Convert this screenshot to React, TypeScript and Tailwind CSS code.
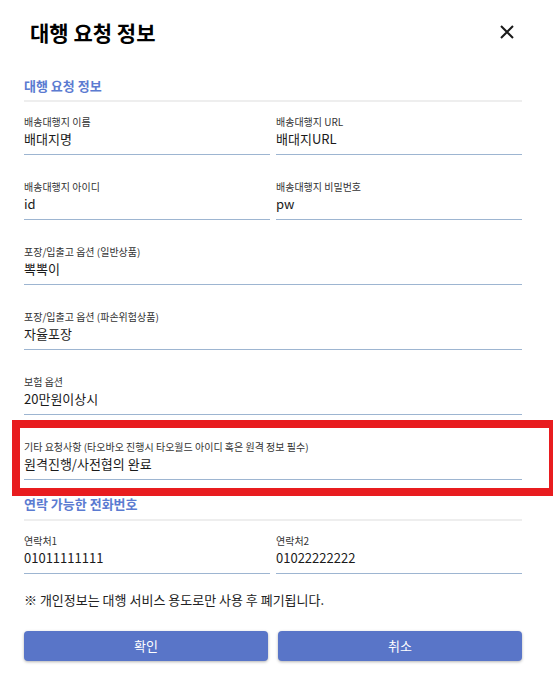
export default function App() {
  const rows: { label: string; value: string }[][] = [
    [
      { label: "배송대행지 이름", value: "배대지명" },
      { label: "배송대행지 URL", value: "배대지URL" },
    ],
    [
      { label: "배송대행지 아이디", value: "id" },
      { label: "배송대행지 비밀번호", value: "pw" },
    ],
    [{ label: "포장/입출고 옵션 (일반상품)", value: "뽁뽁이" }],
    [{ label: "포장/입출고 옵션 (파손위험상품)", value: "자율포장" }],
    [{ label: "보험 옵션", value: "20만원이상시" }],
    [
      {
        label: "기타 요청사항 (타오바오 진행시 타오월드 아이디 혹은 원격 정보 필수)",
        value: "원격진행/사전협의 완료",
      },
    ],
  ];

  const contacts = [
    { label: "연락처1", value: "01011111111" },
    { label: "연락처2", value: "01022222222" },
  ];

  const Field = ({ label, value }: { label: string; value: string }) => (
    <div className="border-b border-[#9db5d1] pb-[5px]">
      <div className="text-[10px] leading-[14px] text-[#333]">{label}</div>
      <div className="text-[13px] leading-[20px] text-[#1a1a1a]">{value}</div>
    </div>
  );

  return (
    <div className="relative w-[553px] h-[676px] overflow-hidden bg-white font-['Noto_Sans_CJK_KR',sans-serif]">
      {/* Header */}
      <div className="flex h-[66px] items-center justify-between pl-[30px] pr-[39px]">
        <h1 className="text-[21px] font-bold text-black">대행 요청 정보</h1>
        <svg width="14" height="14" viewBox="0 0 14 14" className="mb-[2px]">
          <path d="M1 1L13 13M13 1L1 13" stroke="#1a1a1a" strokeWidth="2" />
        </svg>
      </div>

      <div className="pl-6 pr-[31px]">
        {/* Section 1 */}
        <div className="mt-[10px] mb-[4px] text-[13px] font-bold leading-[20px] text-[#5b7bd1]">
          대행 요청 정보
        </div>
        <div className="h-[2px] bg-[#eeeeee]" />

        <div className="flex flex-col gap-[25px] pt-[13px]">
          {rows.map((row, i) => (
            <div key={i} className={row.length === 2 ? "grid grid-cols-2 gap-x-[6px]" : ""}>
              {row.map((f) => (
                <Field key={f.label} label={f.label} value={f.value} />
              ))}
            </div>
          ))}
        </div>

        {/* Section 2 */}
        <div className="mt-[14px] mb-[5px] text-[13px] font-bold leading-[20px] text-[#5b7bd1]">
          연락 가능한 전화번호
        </div>
        <div className="h-[2px] bg-[#eeeeee]" />

        <div className="grid grid-cols-2 gap-x-[6px] pt-[13px]">
          {contacts.map((c) => (
            <Field key={c.label} label={c.label} value={c.value} />
          ))}
        </div>

        <p className="mt-[16px] text-[13px] leading-[20px] text-[#222]">
          ※ 개인정보는 대행 서비스 용도로만 사용 후 폐기됩니다.
        </p>

        <div className="mt-[21px] grid grid-cols-2 gap-[10px]">
          <button className="h-[30px] rounded-[4px] bg-[#5975c8] text-[13px] text-white shadow-[0_1px_3px_rgba(0,0,0,0.3)]">
            확인
          </button>
          <button className="h-[30px] rounded-[4px] bg-[#5975c8] text-[13px] text-white shadow-[0_1px_3px_rgba(0,0,0,0.3)]">
            취소
          </button>
        </div>
      </div>

      {/* red highlight annotation */}
      <div className="pointer-events-none absolute left-[12px] top-[420px] h-[76px] w-[545px] border-[8px] border-[#e81c1f]" />
    </div>
  );
}
